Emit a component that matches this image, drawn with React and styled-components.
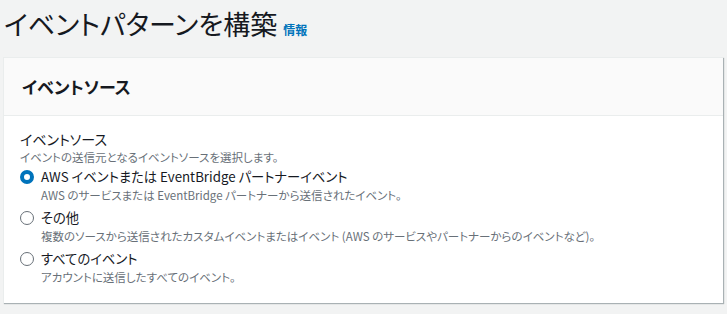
import styled, { createGlobalStyle } from 'styled-components';

const GlobalStyle = createGlobalStyle`
  html, body {
    margin: 0;
    padding: 0;
    background: #f2f3f3;
  }
  body {
    font-family: "Noto Sans CJK JP", "Noto Sans", "Liberation Sans", sans-serif;
    font-feature-settings: "palt";
    color: #16191f;
  }
`;

const Page = styled.div`
  padding: 0 4px 0 3px;
  width: 727px;
  height: 314px;
  box-sizing: border-box;
  overflow: hidden;
`;

const TitleRow = styled.div`
  display: flex;
  align-items: baseline;
  gap: 6px;
  padding: 4px 0 0 1px;
  height: 57px;
  box-sizing: border-box;
`;

const Title = styled.h1`
  margin: 0;
  font-size: 27px;
  font-weight: 400;
  line-height: 40px;
  color: #16191f;
`;

const InfoLink = styled.a`
  font-size: 12px;
  font-weight: 700;
  color: #0073bb;
  text-decoration: none;
`;

const Card = styled.section`
  background: #fff;
  border-top: 1px solid #eaeded;
  border-left: 1px solid #eaeded;
  box-shadow: 1px 1px 1px 0 rgba(0, 28, 36, 0.3);
  width: 719px;
`;

const CardHeader = styled.div`
  background: #fafafa;
  border-bottom: 1px solid #eaeded;
  height: 57px;
  display: flex;
  align-items: center;
  padding: 0 18px;
`;

const CardTitle = styled.h2`
  margin: 0;
  font-size: 17px;
  font-weight: 700;
  color: #16191f;
`;

const CardBody = styled.div`
  padding: 13px 16px 17px;
`;

const FieldLabel = styled.div`
  font-size: 14px;
  line-height: 20px;
  color: #16191f;
`;

const FieldDesc = styled.div`
  font-size: 11.5px;
  line-height: 16px;
  color: #687078;
`;

const RadioGroup = styled.div`
  display: flex;
  flex-direction: column;
  gap: 4px;
  margin-top: 2px;
`;

const Option = styled.label`
  display: grid;
  grid-template-columns: 14px 1fr;
  grid-template-rows: 20px 17px;
  column-gap: 7px;
  align-items: center;
`;

const RadioDot = styled.span`
  width: 14px;
  height: 14px;
  box-sizing: border-box;
  border-radius: 50%;
  background: #fff;
  border: ${({ $checked }) => ($checked ? '4px solid #0073bb' : '1px solid #687078')};
  grid-row: 1;
`;

const OptionLabel = styled.span`
  font-size: 13.3px;
  line-height: 20px;
  color: #16191f;
  grid-row: 1;
`;

const OptionDesc = styled.span`
  grid-column: 2;
  font-size: 11.5px;
  line-height: 17px;
  color: #687078;
`;

const options = [
  {
    label: 'AWS イベントまたは EventBridge パートナーイベント',
    desc: 'AWS のサービスまたは EventBridge パートナーから送信されたイベント。',
    checked: true,
  },
  {
    label: 'その他',
    desc: '複数のソースから送信されたカスタムイベントまたはイベント (AWS のサービスやパートナーからのイベントなど)。',
  },
  {
    label: 'すべてのイベント',
    desc: 'アカウントに送信したすべてのイベント。',
  },
];

export default function App() {
  return (
    <>
      <GlobalStyle />
      <Page>
        <TitleRow>
          <Title>イベントパターンを構築</Title>
          <InfoLink href="#">情報</InfoLink>
        </TitleRow>
        <Card>
          <CardHeader>
            <CardTitle>イベントソース</CardTitle>
          </CardHeader>
          <CardBody>
            <FieldLabel>イベントソース</FieldLabel>
            <FieldDesc>イベントの送信元となるイベントソースを選択します。</FieldDesc>
            <RadioGroup>
              {options.map((o) => (
                <Option key={o.label}>
                  <RadioDot $checked={o.checked} />
                  <OptionLabel>{o.label}</OptionLabel>
                  <OptionDesc>{o.desc}</OptionDesc>
                </Option>
              ))}
            </RadioGroup>
          </CardBody>
        </Card>
      </Page>
    </>
  );
}
